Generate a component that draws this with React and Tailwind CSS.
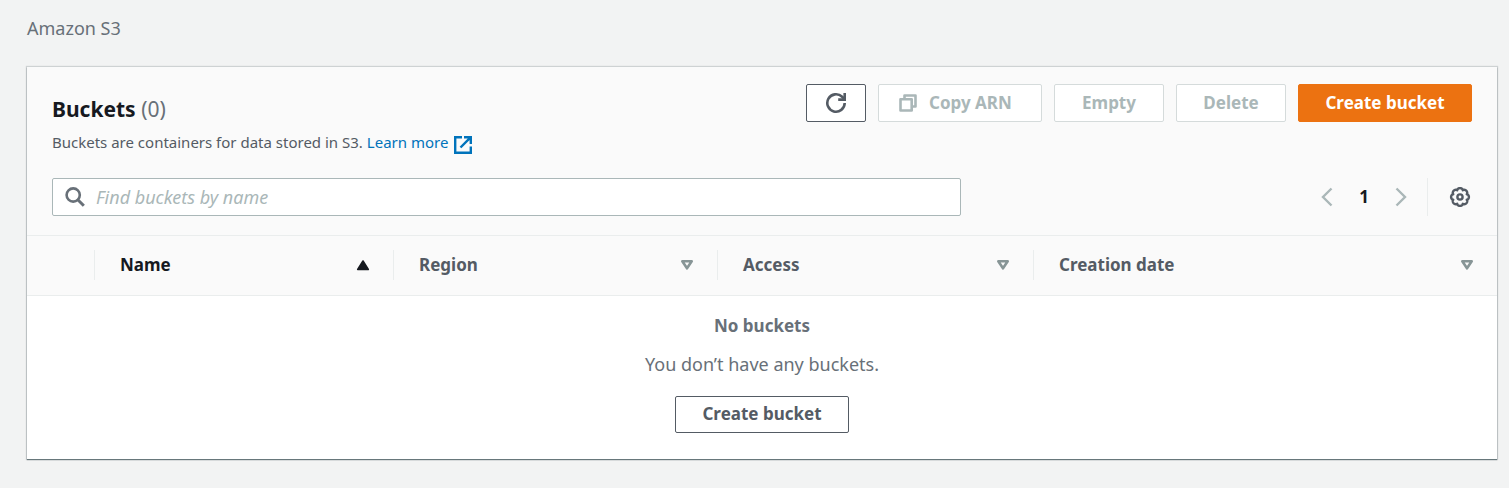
import React from "react";

const buttonBase =
  "flex items-center rounded-xs border text-[17px] font-bold whitespace-nowrap";

function RefreshIcon() {
  return (
    <svg width="22" height="22" viewBox="0 0 22 22" fill="none" stroke="currentColor" strokeWidth="2.6" aria-hidden="true">
      <path d="M19.700 11a8.700 8.700 0 1 1-2.600-6.200L19.500 7.200" />
      <path d="M19.700 1v6.600h-6.500" />
    </svg>
  );
}

function CopyIcon() {
  return (
    <svg width="18" height="18" viewBox="0 0 18 18" fill="none" stroke="currentColor" strokeWidth="2.600" strokeLinejoin="round" aria-hidden="true">
      <path d="M1.500 5.300h11.200v11.200H1.500z" />
      <path d="M5.500 4.800V1.500h11v11H13" />
    </svg>
  );
}

function ExternalIcon() {
  return (
    <svg width="18" height="18" viewBox="0 0 18 18" fill="none" stroke="currentColor" strokeWidth="2.400" aria-hidden="true">
      <path d="M8 1.200H1.200v15.600h15.600V10.500" />
      <path d="M10 1.200h6.800v6.800M16.800 1.200L6.500 11.500" />
    </svg>
  );
}

function SearchIcon() {
  return (
    <svg width="20" height="20" viewBox="0 0 20 20" fill="none" stroke="currentColor" strokeWidth="2.600" aria-hidden="true">
      <circle cx="8.200" cy="8" r="6.600" />
      <path d="M12.800 12.700l6 6" strokeWidth="3" />
    </svg>
  );
}

const gearOutline = Array.from({ length: 128 }, (_, i) => {
  const angle = (i / 128) * Math.PI * 2;
  const radius = 7.3 + 1.6 * Math.pow(Math.abs(Math.cos(4 * angle)), 0.6);
  return `${12 + radius * Math.cos(angle)},${11 + radius * Math.sin(angle)}`;
}).join(" ");

function GearIcon() {
  return (
    <svg width="24" height="22" viewBox="0 0 24 22" fill="none" stroke="currentColor" strokeWidth="2.400" strokeLinejoin="round" aria-hidden="true">
      <polygon points={gearOutline} />
      <circle cx="12" cy="11" r="2.600" />
    </svg>
  );
}

function Chevron({ d }) {
  return (
    <svg width="12" height="20" viewBox="0 0 12 20" fill="none" stroke="currentColor" strokeWidth="2.400" aria-hidden="true">
      <path d={d} />
    </svg>
  );
}

function SortIcon({ ascending }) {
  return ascending ? (
    <svg width="14" height="12" viewBox="0 0 14 12" fill="currentColor" stroke="currentColor" strokeWidth="1.600" strokeLinejoin="round" aria-hidden="true">
      <path d="M7 2l5.300 8.500H1.700z" />
    </svg>
  ) : (
    <svg width="14" height="12" viewBox="0 0 14 12" fill="none" stroke="currentColor" strokeWidth="2.600" strokeLinejoin="round" className="text-[#879596]" aria-hidden="true">
      <path d="M2.300 2.300h9.400L7 9.300z" />
    </svg>
  );
}

const columns = [
  { label: "Name", width: "w-[299px]", ascending: true },
  { label: "Region", width: "w-[324px]" },
  { label: "Access", width: "w-[316px]" },
  { label: "Creation date", width: "" },
];

export default function App() {
  return (
    <div className="min-h-screen bg-[#f2f3f3] pt-4 pr-3 pb-7 pl-[27px] font-['Noto_Sans','Open_Sans',sans-serif] text-[#545b64]">
      <nav aria-label="Breadcrumb" className="text-lg leading-6 text-[#687078]">
        <a href="#s3">Amazon S3</a>
      </nav>

      <main className="mt-[27px] bg-white shadow-[0_1px_1px_0_rgba(0,28,36,0.5),0_0_1px_1px_rgba(0,28,36,0.15)]">
        <header className="border-b border-[#eaeded] bg-[#fafafa] px-[25px] pt-[17px] pb-[19px]">
          <div className="flex items-start justify-between">
            <div className="pt-[9px]">
              <h1 className="text-[21px] leading-8 font-bold text-[#16191f]">
                Buckets <span className="font-normal text-[#687078]">(0)</span>
              </h1>
              <p className="mt-[5px] flex items-center text-[15px] leading-6">
                Buckets are containers for data stored in S3.
                <a href="#learn" className="ml-1 flex items-center gap-1.5 text-[#0073bb]">
                  Learn more
                  <span className="pt-1.5"><ExternalIcon /></span>
                </a>
              </p>
            </div>
            <div className="flex gap-3">
              <button type="button" aria-label="Refresh" className={`${buttonBase} h-[38px] w-[60px] justify-center border-[#545b64] bg-white`}>
                <RefreshIcon />
              </button>
              <button type="button" disabled className={`${buttonBase} h-[38px] w-[164px] gap-3 border-[#d5dbdb] bg-white pl-5 text-[#aab7b8]`}>
                <CopyIcon />
                Copy ARN
              </button>
              <button type="button" disabled className={`${buttonBase} h-[38px] w-[110px] justify-center border-[#d5dbdb] bg-white text-[#aab7b8]`}>
                Empty
              </button>
              <button type="button" disabled className={`${buttonBase} h-[38px] w-[110px] justify-center border-[#d5dbdb] bg-white text-[#aab7b8]`}>
                Delete
              </button>
              <button type="button" className={`${buttonBase} h-[38px] w-[174px] justify-center border-[#ec7211] bg-[#ec7211] text-white`}>
                Create bucket
              </button>
            </div>
          </div>

          <div className="mt-6 flex items-center justify-between">
            <label className="flex h-[38px] w-[64%] items-center gap-[11px] rounded-xs border border-[#aab7b8] bg-white px-3 text-[#687078]">
              <SearchIcon />
              <input
                type="search"
                aria-label="Find buckets by name"
                placeholder="Find buckets by name"
                className="min-w-0 flex-1 bg-transparent text-lg outline-none placeholder:text-[#aab7b8] placeholder:italic"
              />
            </label>
            <div className="flex h-[38px] items-center">
              <button type="button" aria-label="Previous page" disabled className="text-[#aab7b8]">
                <Chevron d="M10.500 1.500L2 10l8.500 8.500" />
              </button>
              <button type="button" aria-current="page" className="w-[62px] text-[17px] font-bold text-[#16191f]">
                1
              </button>
              <button type="button" aria-label="Next page" disabled className="text-[#aab7b8]">
                <Chevron d="M1.500 1.500L10 10l-8.500 8.500" />
              </button>
              <span className="mx-5 h-full border-l border-[#eaeded]" />
              <button type="button" aria-label="Preferences">
                <GearIcon />
              </button>
            </div>
          </div>
        </header>

        <table className="w-full table-fixed border-collapse">
          <thead className="border-b border-[#eaeded] bg-[#fafafa]">
            <tr>
              <td className="w-[67px]" />
              {columns.map(({ label, width, ascending }) => (
                <th
                  key={label}
                  scope="col"
                  aria-sort={ascending ? "ascending" : undefined}
                  className={`${width} h-[59px] p-0 text-left align-top text-[17px] font-bold`}
                >
                  <button
                    type="button"
                    className={`mt-[14px] flex h-[30px] w-full items-center justify-between border-l border-[#eaeded] pr-[23px] pl-[25px] ${ascending ? "text-[#16191f]" : ""}`}
                  >
                    {label}
                    <SortIcon ascending={ascending} />
                  </button>
                </th>
              ))}
            </tr>
          </thead>
          <tbody>
            <tr>
              <td colSpan={5} className="p-0">
                <div className="flex flex-col items-center pt-[18px] pb-[26px] text-[#687078]">
                  <strong className="text-[17px] leading-6 font-bold">No buckets</strong>
                  <p className="mt-[14px] text-lg leading-6">You don’t have any buckets.</p>
                  <button type="button" className={`${buttonBase} mt-5 h-[37px] w-[174px] justify-center border-[#545b64] bg-white text-[#545b64]`}>
                    Create bucket
                  </button>
                </div>
              </td>
            </tr>
          </tbody>
        </table>
      </main>
    </div>
  );
}
